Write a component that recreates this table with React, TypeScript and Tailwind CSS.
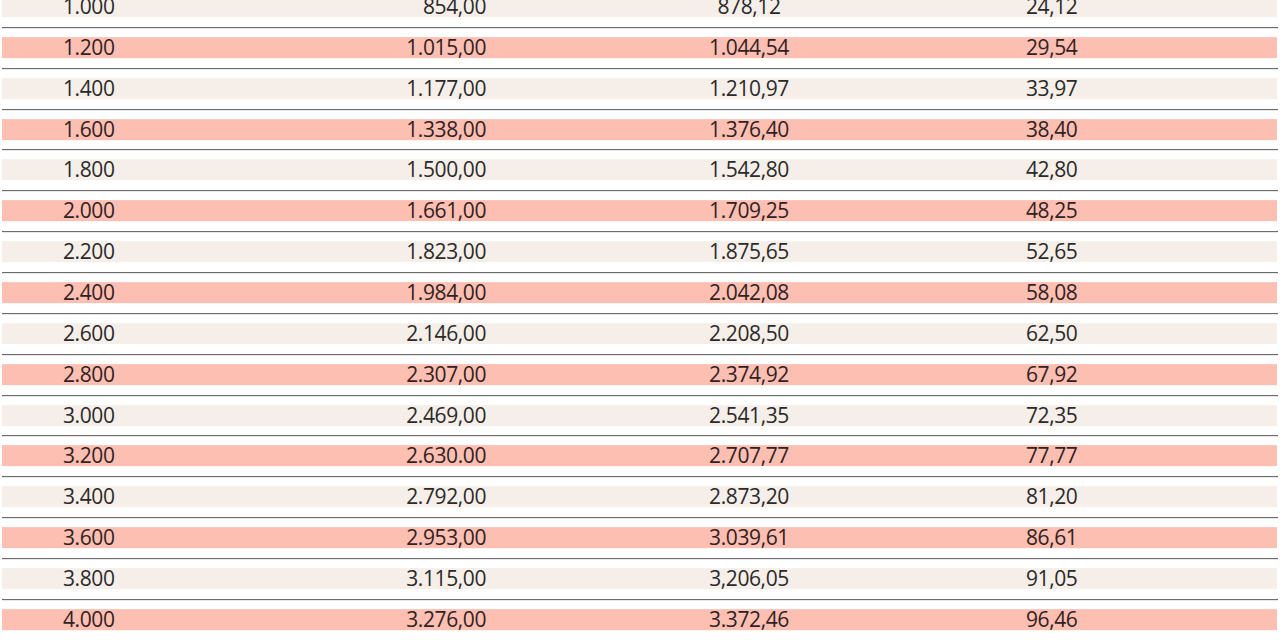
const rows: [string, string, string, string][] = [
  ['1.000', '854,00', '878,12', '24,12'],
  ['1.200', '1.015,00', '1.044,54', '29,54'],
  ['1.400', '1.177,00', '1.210,97', '33,97'],
  ['1.600', '1.338,00', '1.376,40', '38,40'],
  ['1.800', '1.500,00', '1.542,80', '42,80'],
  ['2.000', '1.661,00', '1.709,25', '48,25'],
  ['2.200', '1.823,00', '1.875,65', '52,65'],
  ['2.400', '1.984,00', '2.042,08', '58,08'],
  ['2.600', '2.146,00', '2.208,50', '62,50'],
  ['2.800', '2.307,00', '2.374,92', '67,92'],
  ['3.000', '2.469,00', '2.541,35', '72,35'],
  ['3.200', '2.630.00', '2.707,77', '77,77'],
  ['3.400', '2.792,00', '2.873,20', '81,20'],
  ['3.600', '2.953,00', '3.039,61', '86,61'],
  ['3.800', '3.115,00', '3,206,05', '91,05'],
  ['4.000', '3.276,00', '3.372,46', '96,46'],
];

export default function App() {
  return (
    <div className="w-[1280px] h-[640px] overflow-hidden bg-white font-['Open_Sans',sans-serif]">
      <div className="-translate-y-[12.86px]">
        {rows.map((r, i) => {
          const pink = i % 2 === 1;
          return (
            <div key={r[0]} className="h-[40.86px] pt-[9px] ml-[2px] mr-[2px] border-b border-[#555555]">
              <div
                className={`h-[21px] mr-[1px] flex items-center text-[21px] tracking-[-0.4px] leading-[21px] ${
                  pink ? 'bg-[#fcbfb2] text-[#33211f]' : 'bg-[#f6efe9] text-[#2a2a2a]'
                }`}
              >
                {/* amount */}
                <div className="w-[200px] pl-[61px]">{r[0]}</div>
                {/* net */}
                <div className="w-[284px] text-right">{r[1]}</div>
                {/* gross */}
                <div className="w-[526px] text-center">{r[2]}</div>
                {/* difference */}
                <div className="flex-1 pl-[14px]">{r[3]}</div>
              </div>
            </div>
          );
        })}
      </div>
    </div>
  );
}
